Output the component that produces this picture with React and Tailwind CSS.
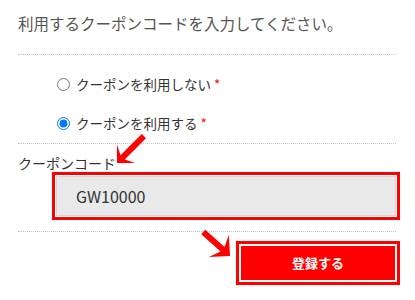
import React from "react";

function Arrow({ x, y, angle, len, head, w }) {
  const h = head;
  const pts = [
    [0, 0],
    [-h, -h],
    [-h + 5, -w / 2],
    [-len, -w / 2],
    [-len, w / 2],
    [-h + 5, w / 2],
    [-h, h],
  ]
    .map((p) => p.join(","))
    .join(" ");
  return (
    <svg className="absolute left-0 top-0 pointer-events-none" width="415" height="300">
      <polygon points={pts} fill="#ff0000" transform={`translate(${x} ${y}) rotate(${angle})`} />
    </svg>
  );
}

export default function App() {
  return (
    <div className="relative w-[415px] h-[300px] bg-white overflow-hidden font-['Noto_Sans_CJK_JP','Noto_Sans',sans-serif]">
      <div className="px-[18px] pt-[11px] w-[414px]">
        <div className="text-[15.5px] leading-[24px] text-[#555]">利用するクーポンコードを入力してください。</div>
        <div className="mt-[19px] border-t border-dotted border-[#c4c4c4]" />
        <div className="mt-[17px] flex flex-col gap-[15px] pl-[39px] text-[13.5px] text-[#333]">
          <label className="flex items-center h-[24px] gap-[6px]">
            <input type="radio" name="c" className="m-0 w-[13px] h-[13px]" readOnly />
            <span>
              クーポンを利用しない <span className="text-[#ff0000]">*</span>
            </span>
          </label>
          <label className="flex items-center h-[24px] gap-[6px]">
            <input type="radio" name="c" className="m-0 w-[13px] h-[13px]" defaultChecked />
            <span>
              クーポンを利用する <span className="text-[#ff0000]">*</span>
            </span>
          </label>
        </div>
        <div className="mt-[8px] border-t border-dotted border-[#c4c4c4]" />
        <div className="mt-[11px] text-[14px] leading-[17px] text-[#333]">クーポンコード</div>
        <div className="ml-[34px] -mr-[4px] border-[3px] border-[#ff0000] bg-white p-[1px]">
          <div className="h-[40px] border border-[#d6d6d6] bg-[#e9e9e9] flex items-center pl-[19px] text-[16px] text-[#333]">
            GW10000
          </div>
        </div>
        <div className="mt-[11px] border-t border-dotted border-[#c4c4c4]" />
        <div className="mt-[9px] -mr-[4px] flex justify-end">
          <div className="w-[164px] h-[44px] border-[3px] border-[#ff0000] bg-white p-[2px]">
            <div className="h-full bg-[#ff0000] flex items-center justify-center text-white text-[13px] font-bold">
              登録する
            </div>
          </div>
        </div>
      </div>
      <Arrow x={117} y={163} angle={135} len={38} head={13} w={6} />
      <Arrow x={230} y={256} angle={42} len={36} head={15} w={6} />
    </div>
  );
}
